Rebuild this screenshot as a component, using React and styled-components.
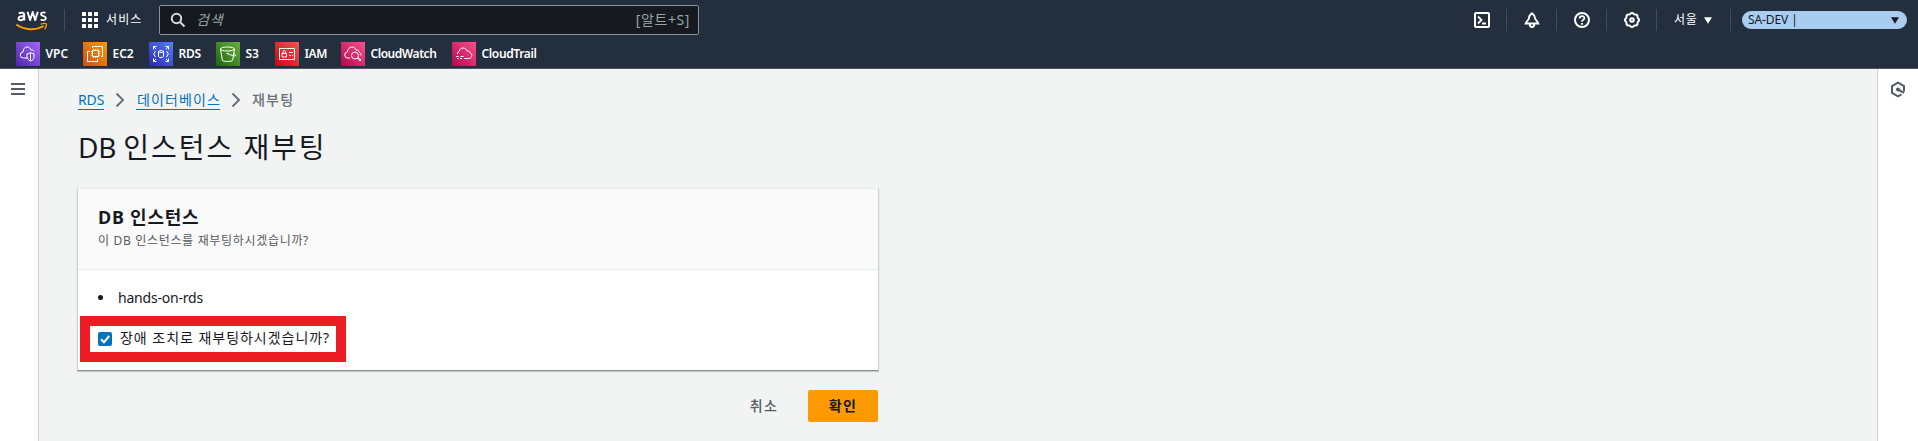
import React from 'react';
import styled, { createGlobalStyle } from 'styled-components';

const Global = createGlobalStyle`
  *, *::before, *::after { box-sizing: border-box; }
  body {
    margin: 0;
    background: #f2f3f3;
    color: #16191f;
    font-family: 'Noto Sans', 'Noto Sans CJK KR', sans-serif;
    font-size: 14px;
    overflow: hidden;
  }
`;

const Page = styled.div`
  display: flex;
  flex-direction: column;
  height: 441px;
`;

const Header = styled.header`
  height: 69px;
  flex: none;
  background: #232f3e;
  border-bottom: 1px solid #4b5563;
  color: #fff;
`;

const TopBar = styled.div`
  display: flex;
  align-items: center;
  height: 40px;
  padding: 0 11px 0 16px;
`;

const Logo = styled.svg`
  width: 32px;
  height: 21px;
  margin-right: 16px;
  flex: none;
`;

const Divider = styled.span`
  width: 1px;
  height: 22px;
  flex: none;
  background: #414d5c;
`;

const ServicesButton = styled.div`
  display: flex;
  align-items: center;
  width: 94px;
  padding-left: 17px;
  gap: 8px;
`;

const Label = styled.span`
  font-size: ${(p) => p.$size || 12}px;
  font-weight: ${(p) => p.$weight || 400};
  letter-spacing: ${(p) => p.$spacing || 0}px;
  line-height: 20px;
  white-space: nowrap;
`;

const SearchBox = styled.div`
  display: flex;
  align-items: center;
  width: 540px;
  height: 30px;
  padding: 0 8px 0 10px;
  background: #16191f;
  border: 1px solid #879596;
  border-radius: 2px;
  color: #95a5a6;
`;

const Placeholder = styled.span`
  flex: 1;
  margin-left: 10px;
  font-size: 14px;
  font-style: italic;
  letter-spacing: 0.8px;
  line-height: 20px;
`;

const Tools = styled.div`
  display: flex;
  align-items: center;
  margin-left: auto;
`;

const Tool = styled.span`
  display: flex;
  align-items: center;
  justify-content: center;
  width: 49px;
  height: 22px;
`;

const Region = styled.div`
  display: flex;
  align-items: center;
  gap: 6px;
  width: 73px;
  padding-left: 17px;
`;

const AccountPill = styled.div`
  display: flex;
  align-items: center;
  justify-content: space-between;
  width: 165px;
  height: 18px;
  margin-left: 11px;
  padding: 0 8px 0 6px;
  border-radius: 9px;
  background: #a9cdf0;
  color: #16191f;
`;

const Favorites = styled.nav`
  display: flex;
  height: 28px;
  padding: 2px 0 2px 16px;
`;

const Favorite = styled.div`
  display: flex;
  gap: 5.5px;
  align-items: center;
  width: ${(p) => p.$width}px;
`;

const Tile = styled.svg`
  width: 24px;
  height: 24px;
  flex: none;
`;

const Body = styled.div`
  display: flex;
  flex: 1;
`;

const SideRail = styled.aside`
  display: flex;
  justify-content: center;
  width: ${(p) => (p.$right ? 41 : 39)}px;
  padding: ${(p) => (p.$right ? '12px 0 0' : '14px 2px 0 0')};
  background: #fff;
  border: 0 solid #cbd0d0;
  border-width: ${(p) => (p.$right ? '0 0 0 1px' : '0 1px 0 0')};
`;

const Main = styled.main`
  flex: 1;
  padding: 19px 0 0 39px;
`;

const Breadcrumbs = styled.nav`
  display: flex;
  align-items: flex-start;
  height: 24px;
  color: #687078;
`;

const Crumb = styled.span`
  height: 22px;
  width: ${(p) => p.$width}px;
  padding-left: ${(p) => p.$indent || 0}px;
  font-size: 14px;
  line-height: 23px;
  letter-spacing: ${(p) => p.$spacing}px;
  white-space: nowrap;
  font-weight: ${(p) => (p.$link ? 400 : 500)};
  color: ${(p) => (p.$link ? '#0073bb' : '#687078')};
  border-bottom: ${(p) => (p.$link ? '1px solid #0073bb' : 'none')};
`;

const Chevron = styled.svg`
  width: 10px;
  height: 16px;
  margin: 4px ${(p) => p.$after}px 0 11px;
`;

const Title = styled.h1`
  margin: 16px 0 22px 0;
  font-size: 28px;
  line-height: 38px;
  font-weight: 400;
  letter-spacing: 1.95px;
`;

const Latin = styled.span`
  letter-spacing: -0.2px;
`;

const Card = styled.section`
  width: 802px;
  height: 183px;
  background: #fff;
  border: 1px solid #cdd2d3;
  border-top-color: #eaeded;
  border-bottom-color: #879596;
  box-shadow: 0 1px 1px rgba(0, 28, 36, 0.2);
  margin-left: -1px;
`;

const CardHeader = styled.header`
  height: 81px;
  padding: 16px 20px 0;
  background: #fafafa;
  border-bottom: 1px solid #eaeded;
`;

const CardTitle = styled.h2`
  margin: 0;
  font-size: 18px;
  line-height: 24px;
  font-weight: 700;
  letter-spacing: 0.75px;
`;

const CardText = styled.p`
  margin: 2px 0 0;
  font-size: 12px;
  line-height: 20px;
  letter-spacing: 0.68px;
  color: #545b64;
`;

const InstanceRow = styled.div`
  display: flex;
  align-items: center;
  gap: 15px;
  height: 46px;
  padding: 9px 0 0 20px;

  &::before {
    content: '';
    width: 5px;
    height: 5px;
    border-radius: 50%;
    background: #16191f;
  }
`;

const Highlight = styled.div`
  display: flex;
  align-items: center;
  width: 266px;
  height: 46px;
  margin-left: 2px;
  padding-left: 8px;
  border: 10px solid #ed1c24;
`;

const CheckLabel = styled(Label)`
  padding-bottom: 2px;
`;

const Checkbox = styled.span`
  display: flex;
  width: 14px;
  height: 14px;
  margin-right: 8px;
  border-radius: 2px;
  background: #0073bb;
`;

const Actions = styled.footer`
  display: flex;
  justify-content: flex-end;
  width: 800px;
  margin-top: 19px;
`;

const Button = styled.button`
  height: 32px;
  width: ${(p) => (p.$primary ? 70 : 88)}px;
  padding: 0;
  border: 0;
  border-radius: 2px;
  background: ${(p) => (p.$primary ? '#ff9900' : 'transparent')};
  color: ${(p) => (p.$primary ? '#16191f' : '#545b64')};
  font: ${(p) => (p.$primary ? 700 : 500)} 14px/30px 'Noto Sans', 'Noto Sans CJK KR', sans-serif;
  letter-spacing: 1.3px;
`;

const tile = {
  VPC: {
    colors: ['#4d27a8', '#a166ff'],
    art: <><path d="M12 16H7.500a3 3 0 0 1-.4-6C7 6.500 9 5 11 5c2.200 0 3.500 1.200 4 3 1.500-.5 2.600.3 2.800 1.500" /><path d="M14.500 10.500v8M11 11.800c2-.3 2.500-.6 3.500-1.300 1 .7 1.500 1 3.500 1.300V15c0 2-1.500 3.200-3.500 4-2-.8-3.500-2-3.500-4z" /></>,
  },
  EC2: {
    colors: ['#c8511b', '#ff9900'],
    art: <><path d="M9.500 6V4.500h10v10H18M7 9.500H4.500v10h10V17" /><path d="M9.500 8.500h6v6h-6z" /><path d="M10.500 7v1.500m2-1.500v1.500m2-1.500v1.500m-4 6V16m2-1.500V16m2-1.500V16M8 9.500h1.500m-1.500 2h1.500m-1.500 2h1.500m6-4H17m-1.500 2H17m-1.500 2H17" strokeWidth=".8" /></>,
  },
  RDS: {
    colors: ['#2e27ad', '#527fff'],
    art: <><path d="M4.500 7.500v-3h3M4.500 4.500 7 7m9.500-2.500h3v3m0-3L17 7M4.500 16.500v3h3m-3 0L7 17m9.500 2.500h3v-3m0 3L17 17M6.500 9 4.700 12l1.800 3M17.500 9l1.800 3-1.800 3" /><path d="M9.500 9.500v5c0 1.300 5 1.300 5 0v-5c0-1.300-5-1.300-5 0 0 1.300 5 1.300 5 0" /></>,
  },
  S3: {
    colors: ['#1b660f', '#6cae3e'],
    art: <><ellipse cx="11.500" cy="7" rx="7" ry="2" /><path d="m4.500 7 1.800 11c0 2 10.400 2 10.400 0L18.500 7M11.500 11.500c3 1.500 7 3 8 2.300.7-.7-1-1.800-2-2.300" /><circle cx="11.500" cy="11.500" r=".5" /></>,
  },
  IAM: {
    colors: ['#bd0816', '#ff5252'],
    art: <><path d="M4.500 6.500h15v11h-15zM7 11.500h4.500v3.500H7zM8 11.500V10c0-2 2.500-2 2.500 0v1.500M14 10.500h4M14 13.500h2m1 0h1" /></>,
  },
  CloudWatch: {
    colors: ['#b0084d', '#ff4f8b'],
    art: <><path d="M9 16H7a3 3 0 0 1-.5-6C6.500 7 8.500 5 11 5s3.500 1.500 4 3c2-.5 3.500 1 3.500 2.500 1 .5 1.500 1.500 1.500 3" /><circle cx="14" cy="13.500" r="3.500" /><path d="m16.500 16 2.500 3 1-1-3-2.500" /></>,
  },
  CloudTrail: {
    colors: ['#b0084d', '#ff4f8b'],
    art: <><path d="M5.500 12c0-2 1-2.500 2-3 0-2 2-3 3.500-3 2 0 3.300 1 4 3 1.500-.5 2.500.5 2.700 1.500 3 .7 2.800 6-1 6H12M4 14.500h3m1.500 0h3M5 16.500h1.500m1.500 0h2" /></>,
  },
};

const favorites = [
  { name: 'VPC', width: 67, spacing: 0 },
  { name: 'EC2', width: 66, spacing: 0 },
  { name: 'RDS', width: 67, spacing: -0.2 },
  { name: 'S3', width: 59, spacing: 0 },
  { name: 'IAM', width: 66, spacing: -0.4 },
  { name: 'CloudWatch', width: 111, spacing: -0.45 },
  { name: 'CloudTrail', width: 100, spacing: -0.35 },
];

const ServiceTile = ({ name }) => (
  <Tile viewBox="0 0 24 24">
    <defs>
      <linearGradient id={`g-${name}`} x1="0" y1="1" x2="1" y2="0">
        <stop offset="0" stopColor={tile[name].colors[0]} />
        <stop offset="1" stopColor={tile[name].colors[1]} />
      </linearGradient>
    </defs>
    <rect width="24" height="24" fill={`url(#g-${name})`} />
    <g fill="none" stroke="#fff" strokeWidth="1">{tile[name].art}</g>
  </Tile>
);

const AwsLogo = () => (
  <Logo viewBox="0 0 32 21">
    <g fill="none" stroke="#fff" strokeWidth="2" strokeLinejoin="round" transform="translate(0.5 1)">
      <path d="M2.300 2.500C4 1.300 7.700 1 7.700 4v5.500M7.500 5.500C5 4.800 2 5.200 2 7.600c0 2.700 4.500 2 5.700-.6" />
      <path d="m11 .8 2.600 8.300L16.200 1l2.500 8.100L21.300.8" strokeWidth="1.900" />
      <path d="M29 1.900c-1.700-.8-4.600-.6-4.600 1.200 0 2.500 5 1.400 5 4.100 0 2.200-3.400 2.300-5.300 1.300" strokeWidth="1.800" />
    </g>
    <path d="M.3 14.500c8.500 6 19.500 6 27.500 1.500" fill="none" stroke="#f90" strokeWidth="2" />
    <path d="M24.700 14.300c2-.9 4.500-1 5.600-.4.400 1-.2 3.800-1.800 5.300" fill="none" stroke="#f90" strokeWidth="1.400" />
  </Logo>
);

const GridIcon = () => (
  <svg width="16" height="16" fill="#fff">
    {[0, 6, 12].map((y) => [0, 6, 12].map((x) => (
      <rect key={`${x}-${y}`} x={x} y={y} width="4" height="4" rx=".5" />
    )))}
  </svg>
);

const Icon = ({ children }) => (
  <svg width="16" height="16" viewBox="0 0 16 16" fill="none" stroke="#fff" strokeWidth="2">{children}</svg>
);

const gearPoints = Array.from({ length: 64 }, (_, i) => {
  const a = (i / 64) * Math.PI * 2;
  const r = 6.600 + 0.5 * Math.cos(8 * a);
  return `${(8 + r * Math.cos(a)).toFixed(2)},${(8 + r * Math.sin(a)).toFixed(2)}`;
}).join(' ');

const Caret = ({ color }) => (
  <svg width="8" height="7" viewBox="0 0 8 7"><path d="M0 .3h8L4 6.700z" fill={color} /></svg>
);

const BreadcrumbChevron = ({ after }) => (
  <Chevron $after={after} viewBox="0 0 10 16"><path d="m1.500 1.500 6.500 6.500-6.500 6.500" fill="none" stroke="#687078" strokeWidth="2" /></Chevron>
);

export default function App() {
  return (
    <Page>
      <Global />
      <Header>
        <TopBar>
          <AwsLogo />
          <Divider />
          <ServicesButton>
            <GridIcon />
            <Label $spacing={1.1}>서비스</Label>
          </ServicesButton>
          <SearchBox>
            <svg width="16" height="16" viewBox="0 0 16 16" fill="none" stroke="#d5dbdb" strokeWidth="2">
              <circle cx="6.500" cy="6.500" r="4.700" /><path d="m10 10 4.500 4.500" />
            </svg>
            <Placeholder>검색</Placeholder>
            <Label $size={14} $spacing={0.6}>[알트+S]</Label>
          </SearchBox>
          <Tools>
            <Tool><Icon><rect x="1" y="1" width="14" height="14" rx="1" /><path d="m4 4.500 3.500 3.500L4 11.500M8 11.500h4" strokeWidth="1.800" /></Icon></Tool>
            <Divider />
            <Tool><Icon><path d="M8 1.200C5.500 3 5 4 5 6c0 2-2.500 3-3.300 5.500h12.600C13.500 9 11 8 11 6c0-2-.5-3-3-4.800zM5.700 12c0 4 4.600 4 4.600 0" strokeWidth="1.900" /></Icon></Tool>
            <Divider />
            <Tool><Icon><circle cx="8" cy="8" r="7" /><path d="M5.600 6.500C5.600 3.200 10.500 3.400 10.400 6.300 10.300 8 8 7.600 8 9.800M8 11v1.700" strokeWidth="1.800" /></Icon></Tool>
            <Divider />
            <Tool><Icon><polygon points={gearPoints} /><circle cx="8" cy="8" r="1.800" /></Icon></Tool>
            <Divider />
            <Region>
              <Label $spacing={0.8}>서울</Label>
              <Caret color="#fff" />
            </Region>
            <Divider />
            <AccountPill>
              <Label $spacing={-0.1}>SA-DEV |</Label>
              <Caret color="#16191f" />
            </AccountPill>
          </Tools>
        </TopBar>
        <Favorites>
          {favorites.map((f) => (
            <Favorite key={f.name} $width={f.width}>
              <ServiceTile name={f.name} />
              <Label $weight={600} $spacing={f.spacing}>{f.name}</Label>
            </Favorite>
          ))}
        </Favorites>
      </Header>
      <Body>
        <SideRail>
          <svg width="14" height="12" viewBox="0 0 14 12"><path d="M0 1h14M0 6h14M0 11h14" stroke="#545b64" strokeWidth="2" /></svg>
        </SideRail>
        <Main>
          <Breadcrumbs>
            <Crumb $link $width={26} $spacing={-0.1}>RDS</Crumb>
            <BreadcrumbChevron after={11} />
            <Crumb $link $width={84} $indent={1} $spacing={1.1}>데이터베이스</Crumb>
            <BreadcrumbChevron after={11} />
            <Crumb $spacing={1.2}>재부팅</Crumb>
          </Breadcrumbs>
          <Title><Latin>DB </Latin>인스턴스 재부팅</Title>
          <Card>
            <CardHeader>
              <CardTitle>DB 인스턴스</CardTitle>
              <CardText>이 DB 인스턴스를 재부팅하시겠습니까?</CardText>
            </CardHeader>
            <InstanceRow><Label $size={14} $spacing={-0.2}>hands-on-rds</Label></InstanceRow>
            <Highlight>
              <Checkbox>
                <svg width="14" height="14" viewBox="0 0 14 14"><path d="m3 7.200 3 3L11.200 4" fill="none" stroke="#fff" strokeWidth="2" /></svg>
              </Checkbox>
              <CheckLabel $size={14} $spacing={0.97}>장애 조치로 재부팅하시겠습니까?</CheckLabel>
            </Highlight>
          </Card>
          <Actions>
            <Button>취소</Button>
            <Button $primary>확인</Button>
          </Actions>
        </Main>
        <SideRail $right>
          <svg width="16" height="17" viewBox="0 0 16 17" fill="none" stroke="#545b64" strokeWidth="2">
            <path d="M14 10.500V5L8 1.700 2 5v7l6 3.300 3.500-2" /><circle cx="8" cy="8.500" r="1" fill="#545b64" /><path d="m8 8.500 6 3.300" />
          </svg>
        </SideRail>
      </Body>
    </Page>
  );
}
